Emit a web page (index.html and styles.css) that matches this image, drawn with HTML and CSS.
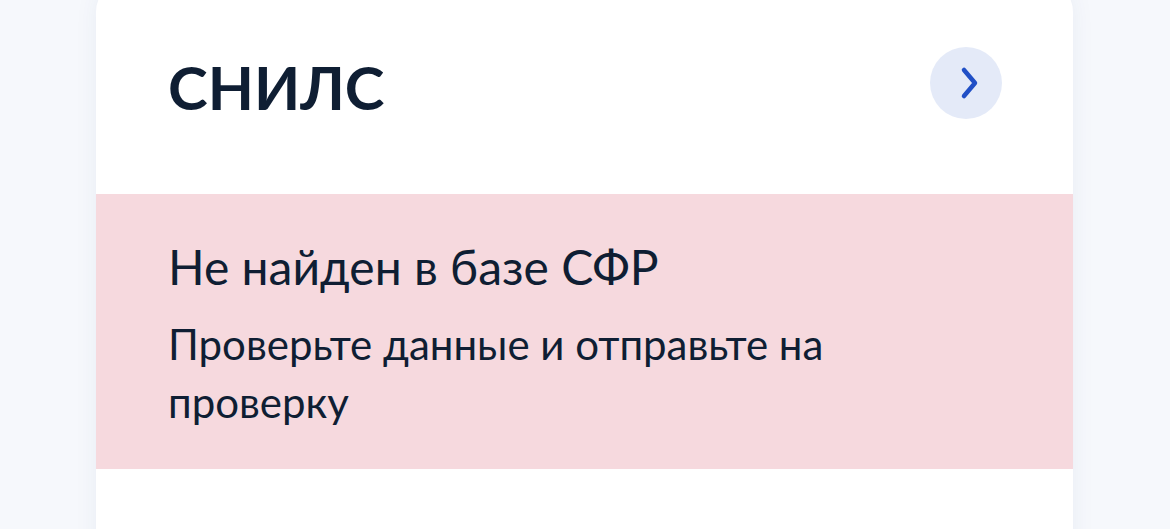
FILE: index.html
```html
<!DOCTYPE html>
<html lang="ru">

<head>
  <meta charset="UTF-8">
  <meta name="viewport" content="width=device-width, initial-scale=1.0">
  <title>СНИЛС</title>
  <link rel="stylesheet" href="styles.css">
</head>

<body>
  <div class="page">
    <div class="card">
      <div class="card-head">
        <h2 class="card-title">СНИЛС</h2>
        <button class="arrow-btn" type="button">
          <svg width="72" height="72" viewBox="0 0 72 72">
            <path d="M34 23L45 36L34 49" fill="none" stroke="currentColor" stroke-width="4.5" stroke-linecap="round" stroke-linejoin="round" />
          </svg>
        </button>
      </div>
      <div class="status-error">
        <div class="status-title">Не найден в базе СФР</div>
        <div class="status-text">Проверьте данные и отправьте на проверку</div>
      </div>
      <div class="card-body"></div>
    </div>
  </div>
</body>

</html>
```

FILE: styles.css
```css
body {
  margin: 0;
  background: #f6f8fc;
  font-family: Lato, "Noto Sans", sans-serif;
  color: #0f1e33;
}

.page {
  padding: 0 97px 0 96px;
}

.card {
  margin-top: -20px;
  background: #fff;
  border-radius: 32px;
  box-shadow: 0 0 24px rgba(40, 60, 120, 0.06);
  overflow: hidden;
}

.card-head {
  display: flex;
  justify-content: space-between;
  align-items: flex-start;
  height: 214px;
  padding: 67px 71px 0 72px;
  box-sizing: border-box;
}

.card-title {
  margin: 0;
  padding-top: 4px;
  font-size: 60px;
  line-height: 72px;
  font-weight: 700;
}

.arrow-btn {
  display: flex;
  justify-content: center;
  align-items: center;
  width: 72px;
  height: 72px;
  border: none;
  border-radius: 50%;
  background: #e4eaf8;
  color: #2150c6;
  padding: 0;
}

.status-error {
  background: #f6d9de;
  padding: 45px 72px 38px;
}

.status-title {
  font-size: 48px;
  line-height: 56px;
}

.status-text {
  margin-top: 20px;
  font-size: 42px;
  line-height: 58px;
  max-width: 760px;
}

.card-body {
  height: 120px;
}
```
